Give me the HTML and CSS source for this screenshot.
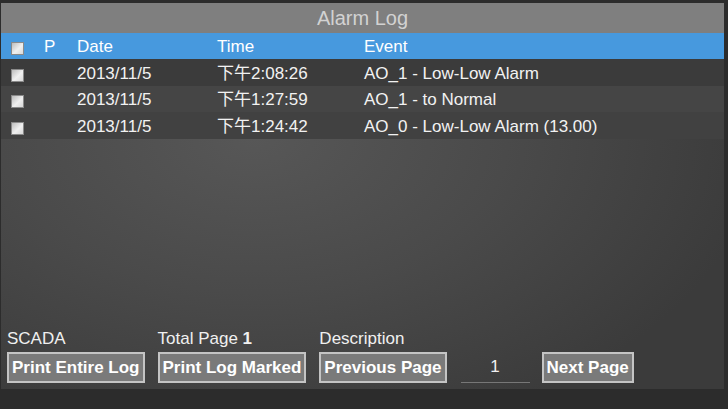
FILE: index.html
```html
<!DOCTYPE html>
<html lang="zh-Hant">
<head>
  <meta charset="UTF-8">
  <meta name="viewport" content="width=device-width, initial-scale=1.0">
  <title>Alarm Log</title>
  <link rel="stylesheet" href="styles.css">
</head>
<body>
  <div class="window">
    <div class="title">Alarm Log</div>
    <div class="log">
      <div class="row head">
        <span class="cell"><span class="check"></span></span>
        <span class="cell">P</span>
        <span class="cell">Date</span>
        <span class="cell">Time</span>
        <span class="cell">Event</span>
      </div>
      <div class="row r1">
        <span class="cell"><span class="check"></span></span>
        <span class="cell"></span>
        <span class="cell">2013/11/5</span>
        <span class="cell">下午2:08:26</span>
        <span class="cell">AO_1 - Low-Low Alarm</span>
      </div>
      <div class="row r2">
        <span class="cell"><span class="check"></span></span>
        <span class="cell"></span>
        <span class="cell">2013/11/5</span>
        <span class="cell">下午1:27:59</span>
        <span class="cell">AO_1 - to Normal</span>
      </div>
      <div class="row r3">
        <span class="cell"><span class="check"></span></span>
        <span class="cell"></span>
        <span class="cell">2013/11/5</span>
        <span class="cell">下午1:24:42</span>
        <span class="cell">AO_0 - Low-Low Alarm (13.00)</span>
      </div>
    </div>
    <div class="controls">
      <div class="label">SCADA</div>
      <div class="label">Total Page <b>1</b></div>
      <div class="label">Description</div>
      <div></div>
      <div></div>
      <button class="btn">Print Entire Log</button>
      <button class="btn">Print Log Marked</button>
      <button class="btn">Previous Page</button>
      <input class="page" type="text" value="1">
      <button class="btn">Next Page</button>
    </div>
  </div>
</body>
</html>
```

FILE: styles.css
```css
body {
  margin: 0;
  background-color: #2c2c2c;
  font-family: "Liberation Sans", "Noto Sans CJK TC", sans-serif;
  color: #f2f2f2;
}
.window {
  margin: 3px 4px 0 1px;
  height: 386px;
  display: flex;
  flex-direction: column;
  background: radial-gradient(ellipse 70% 80% at 35% 35%, #575757 0%, #4a4a4a 50%, #3b3b3b 100%);
}
.title {
  height: 30px;
  line-height: 31px;
  text-align: center;
  font-size: 20px;
  color: #d2d2d2;
  background-color: #7f7f7f;
}
.log {
  flex: 1;
}
.row {
  box-sizing: border-box;
  display: grid;
  grid-template-columns: 43px 33px 140px 147px 1fr;
  align-items: center;
  height: 26.6px;
  padding-top: 3px;
  font-size: 17px;
  line-height: 20px;
}
.row.head {
  height: 26px;
  padding-top: 2px;
  background-color: #4799de;
  color: #ffffff;
}
.r1 {
  background-color: #3b3b3b;
}
.r2 {
  background-color: #454545;
}
.r3 {
  background-color: #414141;
}
.cell {
  height: 20px;
  white-space: nowrap;
}
.check {
  display: block;
  width: 11px;
  height: 11px;
  margin-left: 10px;
  margin-top: 5px;
  border: 1px solid #8a8a8a;
  background: linear-gradient(135deg, #bdbdbd, #f0f0f0 55%, #d8d8d8);
}
.controls {
  display: grid;
  grid-template-columns: auto auto auto 69px auto;
  column-gap: 13px;
  justify-content: start;
  padding: 0 0 6px 6px;
}
.label {
  font-size: 17px;
  line-height: 20px;
  height: 23px;
  color: #f0f0f0;
}
.label b {
  font-weight: bold;
}
.btn {
  height: 31px;
  padding: 0 3px;
  border: 2px solid #c4c4c4;
  background-color: #7a7a7a;
  color: #ffffff;
  font-family: "Liberation Sans", sans-serif;
  font-weight: bold;
  font-size: 17px;
}
.page {
  width: 69px;
  height: 30px;
  margin-left: 1px;
  padding: 0;
  border: none;
  border-bottom: 1px solid #777;
  background: transparent;
  color: #f0f0f0;
  font-family: "Liberation Sans", sans-serif;
  font-size: 17px;
  text-align: center;
}
```
